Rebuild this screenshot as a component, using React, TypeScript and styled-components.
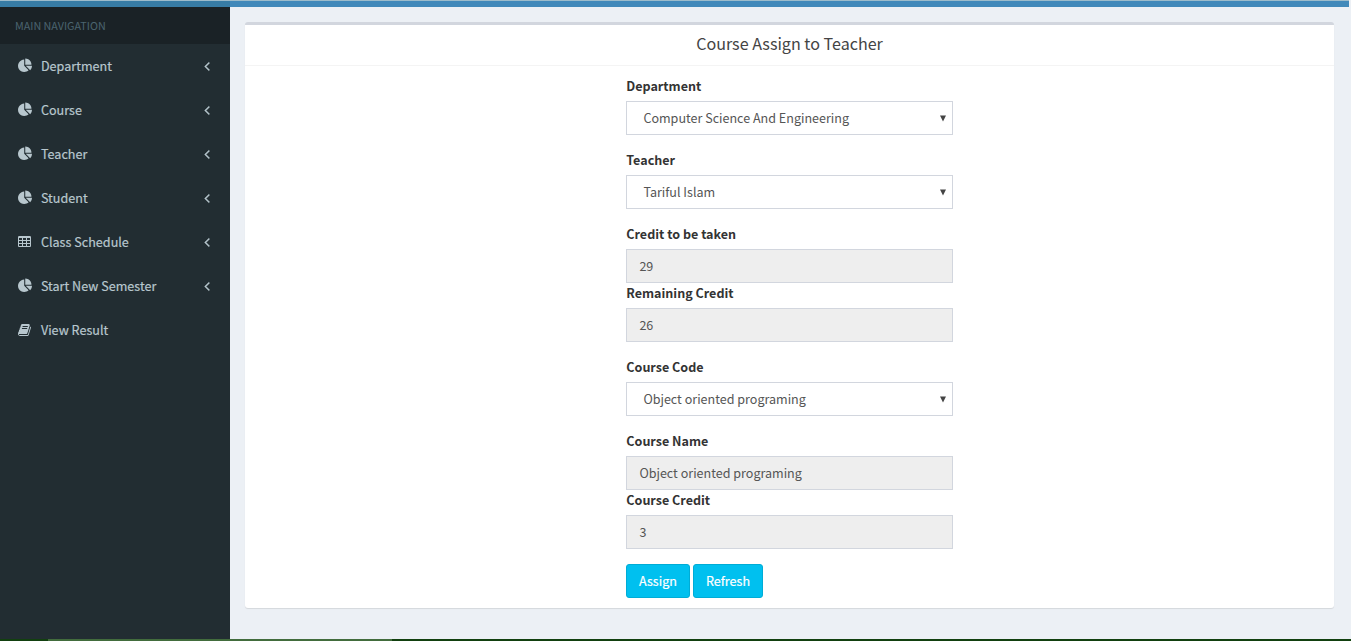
import React from 'react';
import styled, { createGlobalStyle } from 'styled-components';

const GlobalStyle = createGlobalStyle`
  *, *::before, *::after { box-sizing: border-box; }
  body {
    margin: 0;
    background: #ecf0f5;
    color: #333;
    font-family: "Source Sans Pro", "Noto Sans CJK SC", "Noto Sans", sans-serif;
    font-size: 12.55px;
    line-height: 20px;
    overflow: hidden;
  }
`;

const Page = styled.div`
  display: flex;
  flex-direction: column;
  height: 641px;
`;

const TopBar = styled.header`
  flex: none;
  display: flex;
  height: 7px;
  margin-right: 2px;
  border-top: 1px solid #9dbccb;
  background: #4189ba;
`;

const TopBarLogo = styled.div`
  width: 230px;
  background: #377ca5;
`;

const Columns = styled.div`
  flex: 1;
  display: flex;
  min-height: 0;
`;

const Sidebar = styled.aside`
  width: 230px;
  background: #222d32;
`;

const SidebarHeading = styled.div`
  height: 37px;
  padding: 9px 15px 0 15px;
  background: #1a2226;
  color: #4b646f;
  font-size: 10.75px;
`;

const NavItem = styled.a`
  display: flex;
  align-items: center;
  height: 44px;
  padding: 0 15px 0 18px;
  color: #b8c7ce;
`;

const IconSlot = styled.span`
  flex: none;
  width: 22.9px;
  padding-bottom: 1px;
`;

const NavLabel = styled.span`
  flex: 1;
  letter-spacing: 0.03px;
  -webkit-text-stroke: 0.2px currentColor;
`;

const Glyph = styled.svg<{ $size: number; $stroke: number }>`
  flex: none;
  display: block;
  width: ${(p) => p.$size}px;
  height: ${(p) => p.$size}px;
  fill: currentColor;
  stroke: currentColor;
  stroke-width: ${(p) => p.$stroke};
`;

const Content = styled.main`
  flex: 1;
  padding: 15px 17px 0 15px;
`;

const Box = styled.section`
  height: 586px;
  border-top: 3px solid #d2d6de;
  border-radius: 3px;
  background: #fff;
  box-shadow: 0 1px 1px rgba(0, 0, 0, 0.1);
`;

const BoxHeader = styled.div`
  height: 41px;
  padding-top: 8px;
  border-bottom: 1px solid #f4f4f4;
  text-align: center;
`;

const BoxTitle = styled.h3`
  margin: 0;
  color: #444;
  font-size: 16.1px;
  font-weight: 400;
  line-height: 20px;
`;

const Form = styled.form`
  width: 327px;
  margin: 0 auto;
  padding: 10px 0;
`;

const FormGroup = styled.div`
  margin-bottom: 15px;
`;

const Label = styled.label`
  display: block;
  height: 20px;
  margin-bottom: 5px;
  padding-left: 0.3px;
  font-weight: 700;
`;

const Field = styled.div<{ $readOnly?: boolean }>`
  display: flex;
  align-items: center;
  justify-content: space-between;
  height: 34px;
  padding: ${(p) => (p.$readOnly ? '0 12.4px' : '0 6px 0 16.4px')};
  border: 1px solid #d2d6de;
  background: ${(p) => (p.$readOnly ? '#eee' : '#fff')};
  color: #555;
`;

const Caret = styled.svg`
  display: block;
  width: 6px;
  height: 7px;
  fill: #444;
`;

const Buttons = styled.div`
  display: flex;
  gap: 3px;
`;

const Button = styled.button<{ $width: number }>`
  width: ${(p) => p.$width}px;
  height: 34px;
  padding: 0;
  border: 1px solid #00acd6;
  border-radius: 3px;
  background: #00c0ef;
  color: #fff;
  font: inherit;
  -webkit-text-stroke: 0.2px currentColor;
`;

const BottomStrip = styled.footer`
  flex: none;
  display: flex;
  height: 2px;
  background: #12400f;
`;

const StripActive = styled.div`
  width: 344px;
  margin-left: 48px;
  background: #426c3d;
`;

const cell = (x: number, y: number) =>
  `M${x + 384} ${y + 224}v-192q0-14-9-23t-23-9h-320q-14 0-23 9t-9 23v192q0 14 9 23t23 9h320q14 0 23-9t9-23z`;
const cells = [192, 704, 1216]
  .flatMap((x) => [384, 768, 1152].map((y) => cell(x, y)))
  .join('');

const paths = {
  pie: 'M768 890l546 546q-106 108-247.5 168t-298.5 60q-209 0-385.5-103t-279.5-279.5-103-385.5 103-385.5 279.5-279.5 385.5-103v762zm187 6h773q0 157-60 298.5t-168 247.5zm709-128h-768v-768q209 0 385.5 103t279.5 279.5 103 385.5z',
  table: `${cells}M1728 288v1088q0 66-47 113t-113 47h-1344q-66 0-113-47t-47-113v-1088q0-66 47-113t113-47h1344q66 0 113 47t47 113z`,
  book: 'M1703 478q40 57 18 129l-275 906q-19 64-76.5 107.5t-122.5 43.5h-923q-77 0-148.5-53.5t-99.5-131.5q-24-67-2-127 0-4 3-27t4-37q1-8-3-21.5t-3-19.5q2-11 8-21t16.5-23.5 16.5-23.5q23-38 45-91.5t30-91.5q3-10 .5-30t-.5-28q3-11 17-28t17-23q21-36 42-92t25-90q1-9-2.5-32t.5-28q4-13 22-30.5t22-22.5q19-26 42.5-84.5t27.5-96.5q1-8-3-25.5t-2-26.5q2-8 9-18t18-23 17-21q8-12 16.5-30.5t15-35 16-36 19.5-32 26.5-23.5 36-11.5 47.5 5.5l-1 3q38-9 51-9h761q74 0 114 56t18 130l-274 906q-36 119-71.5 153.5t-128.5 34.5h-869q-27 0-38 15-11 16-1 43 24 70 144 70h923q29 0 56-15.5t35-41.5l300-987q7-22 5-57 38 15 59 43zm-1064 2q-4 13 2 22.5t20 9.5h608q13 0 25.5-9.5t16.5-22.5l21-64q4-13-2-22.5t-20-9.5h-608q-13 0-25.5 9.5t-16.5 22.5zm-83 256q-4 13 2 22.5t20 9.5h608q13 0 25.5-9.5t16.5-22.5l21-64q4-13-2-22.5t-20-9.5h-608q-13 0-25.5 9.5t-16.5 22.5z',
  angle: 'M1203 544q0 13-10 23l-393 393 393 393q10 10 10 23t-10 23l-50 50q-10 10-23 10t-23-10l-466-466q-10-10-10-23t10-23l466-466q10-10 23-10t23 10l50 50q10 10 10 23z',
};

const viewBoxes = {
  pie: '0 -64 1792 1792',
  table: '64 0 1792 1792',
  book: '64 0 1792 1792',
  angle: '64 64 1792 1792',
};

type IconProps = { name: keyof typeof paths; size?: number; stroke?: number };

function Icon({ name, size = 14, stroke = 0 }: IconProps) {
  return (
    <Glyph
      $size={size}
      $stroke={stroke}
      viewBox={viewBoxes[name]}
      fillRule="evenodd"
      aria-hidden="true"
    >
      <path d={paths[name]} />
    </Glyph>
  );
}

const navItems: { label: string; icon: keyof typeof paths; leaf?: boolean }[] = [
  { label: 'Department', icon: 'pie' },
  { label: 'Course', icon: 'pie' },
  { label: 'Teacher', icon: 'pie' },
  { label: 'Student', icon: 'pie' },
  { label: 'Class Schedule', icon: 'table' },
  { label: 'Start New Semester', icon: 'pie' },
  { label: 'View Result', icon: 'book', leaf: true },
];

function SelectField({ label, value }: { label: string; value: string }) {
  return (
    <>
      <Label>{label}</Label>
      <Field>
        <span>{value}</span>
        <Caret viewBox="0 0 6 7">
          <path d="M0 0.5h6L3 6.5z" />
        </Caret>
      </Field>
    </>
  );
}

function ReadOnlyField({ label, value }: { label: string; value: string }) {
  return (
    <>
      <Label>{label}</Label>
      <Field $readOnly>
        <span>{value}</span>
      </Field>
    </>
  );
}

export default function App() {
  return (
    <>
      <GlobalStyle />
      <Page>
        <TopBar>
          <TopBarLogo />
        </TopBar>
        <Columns>
          <Sidebar>
            <SidebarHeading>MAIN NAVIGATION</SidebarHeading>
            <nav>
              {navItems.map((item) => (
                <NavItem key={item.label}>
                  <IconSlot>
                    <Icon name={item.icon} size={item.icon === 'pie' ? 14.5 : 14} />
                  </IconSlot>
                  <NavLabel>{item.label}</NavLabel>
                  {!item.leaf && <Icon name="angle" size={15} stroke={50} />}
                </NavItem>
              ))}
            </nav>
          </Sidebar>
          <Content>
            <Box>
              <BoxHeader>
                <BoxTitle>Course Assign to Teacher</BoxTitle>
              </BoxHeader>
              <Form>
                <FormGroup>
                  <SelectField label="Department" value="Computer Science And Engineering" />
                </FormGroup>
                <FormGroup>
                  <SelectField label="Teacher" value="Tariful Islam" />
                </FormGroup>
                <FormGroup>
                  <ReadOnlyField label="Credit to be taken" value="29" />
                  <ReadOnlyField label="Remaining Credit" value="26" />
                </FormGroup>
                <FormGroup>
                  <SelectField label="Course Code" value="Object oriented programing" />
                </FormGroup>
                <FormGroup>
                  <ReadOnlyField label="Course Name" value="Object oriented programing" />
                  <ReadOnlyField label="Course Credit" value="3" />
                </FormGroup>
                <Buttons>
                  <Button type="button" $width={64}>Assign</Button>
                  <Button type="button" $width={70}>Refresh</Button>
                </Buttons>
              </Form>
            </Box>
          </Content>
        </Columns>
        <BottomStrip>
          <StripActive />
        </BottomStrip>
      </Page>
    </>
  );
}
